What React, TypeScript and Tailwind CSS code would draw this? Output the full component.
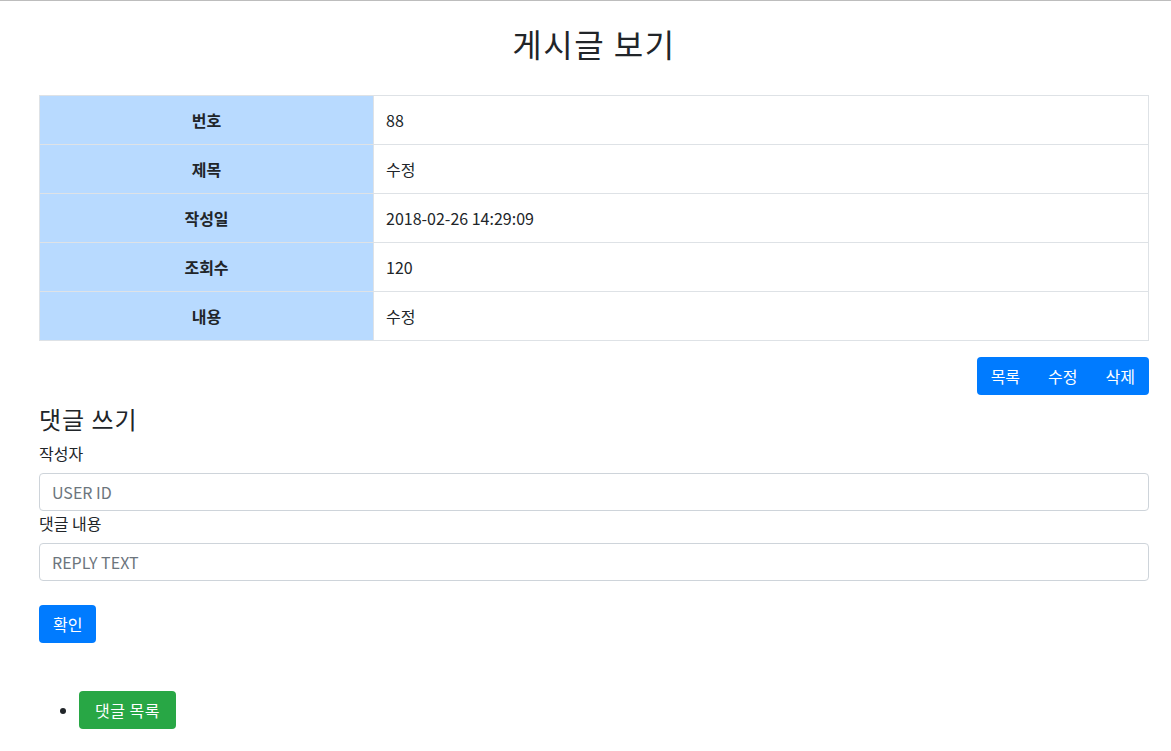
export default function App() {
  const rows: [string, string][] = [
    ["번호", "88"],
    ["제목", "수정"],
    ["작성일", "2018-02-26 14:29:09"],
    ["조회수", "120"],
    ["내용", "수정"],
  ];

  return (
    <div
      className="min-h-[751px] border-t border-[#bdbdbd] bg-white text-[16px] leading-6 text-[#212529]"
      style={{ fontFamily: '"Noto Sans CJK KR", "Noto Sans", sans-serif' }}
    >
      <div className="ml-[39px] w-[1110px]">
        <h2 className="pt-[22px] pb-[32px] text-center text-[32px] leading-[40px] font-normal tracking-[1.5px]">
          게시글 보기
        </h2>

        <table className="w-full border-collapse border border-[#dee2e6]">
          <tbody>
            {rows.map(([label, value]) => (
              <tr key={label}>
                <th className="w-[334px] border border-[#dee2e6] border-l-0 bg-[#b8daff] px-3 py-3 text-center font-bold">
                  {label}
                </th>
                <td className="border border-[#dee2e6] px-3 py-3">{value}</td>
              </tr>
            ))}
          </tbody>
        </table>

        <div className="mt-4 flex justify-end">
          <div className="flex overflow-hidden rounded bg-[#007bff] text-white">
            <button className="h-[38px] px-[14px]">목록</button>
            <button className="h-[38px] px-[14px]">수정</button>
            <button className="h-[38px] px-[14px]">삭제</button>
          </div>
        </div>

        <h4 className="mt-[9px] mb-2 text-[24px] leading-[29px] tracking-[1px]">댓글 쓰기</h4>

        <div>
          <label className="mb-2 block">작성자</label>
          <input
            className="block h-[38px] w-full rounded border border-[#ced4da] px-3 placeholder:text-[#6c757d]"
            placeholder="USER ID"
          />
        </div>
        <div>
          <label className="mb-2 block">댓글 내용</label>
          <input
            className="block h-[38px] w-full rounded border border-[#ced4da] px-3 placeholder:text-[#6c757d]"
            placeholder="REPLY TEXT"
          />
        </div>

        <button className="mt-6 h-[38px] rounded bg-[#007bff] px-[14px] text-white">확인</button>

        <ul className="mt-12 list-disc pl-10">
          <li>
            <button className="h-[38px] rounded bg-[#28a745] px-4 text-white tracking-[0.5px]">댓글 목록</button>
          </li>
        </ul>
      </div>
    </div>
  );
}
